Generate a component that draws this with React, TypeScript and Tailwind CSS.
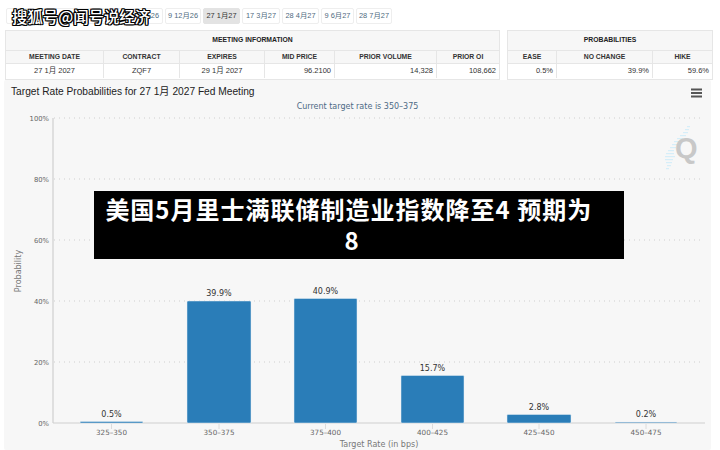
import React from "react";

const tabs = [
  { t: "26", w: "w-[157px]", cls: "justify-end pr-[3px]" },
  { t: "9 12月26", w: "w-[36px]" },
  { t: "27 1月27", w: "w-[37px]", active: true },
  { t: "17 3月27", w: "w-[38px]" },
  { t: "28 4月27", w: "w-[37px]" },
  { t: "9 6月27", w: "w-[33px]" },
  { t: "28 7月27", w: "w-[36px]" },
];

const c1 = "grid-cols-[98px_76px_85px_70px_102px_1fr]";
const c2 = "grid-cols-[49px_96px_1fr]";

function Table({ title, cols, heads, vals, aligns, width }: { title: string; cols: string; heads: string[]; vals: string[]; aligns: string[]; width: string }) {
  return (
    <div className={`${width} border border-[#e6e6e6] text-[7.5px] leading-none text-[#333]`}>
      <div className="h-[20px] flex items-center justify-center bg-[#f7f7f7] font-bold text-[6.8px] text-[#222] border-b border-[#e6e6e6]">{title}</div>
      <div className={`grid ${cols} h-[13px] bg-[#f7f7f7] border-b border-[#e6e6e6]`}>
        {heads.map((h) => (
          <div key={h} className="flex items-center justify-center font-bold text-[6.8px] text-[#333] border-r border-[#e6e6e6] last:border-r-0">{h}</div>
        ))}
      </div>
      <div className={`grid ${cols} h-[14px] bg-white`}>
        {vals.map((v, i) => (
          <div key={i} className={`flex items-center px-[3px] ${aligns[i]} border-r border-[#e6e6e6] last:border-r-0`}>{v}</div>
        ))}
      </div>
    </div>
  );
}

const bars = [
  { l: "325–350", v: "0.5%", x: 80, w: 63, y: 421.5, cx: 111.5, o: 1 },
  { l: "350–375", v: "39.9%", x: 187, w: 64, y: 301, cx: 219, o: 1 },
  { l: "375–400", v: "40.9%", x: 294, w: 63, y: 298.5, cx: 325.5, o: 1 },
  { l: "400–425", v: "15.7%", x: 401, w: 63, y: 375.5, cx: 432.5, o: 1 },
  { l: "425–450", v: "2.8%", x: 507, w: 64, y: 414.5, cx: 539, o: 1 },
  { l: "450–475", v: "0.2%", x: 615, w: 62, y: 422, cx: 646, o: 0.75 },
];

const ticks = [
  { l: "100%", y: 118 },
  { l: "80%", y: 179 },
  { l: "60%", y: 240 },
  { l: "40%", y: 301 },
  { l: "20%", y: 362 },
  { l: "0%", y: 423 },
];

const stripes = [
  [687, 126, 3], [685, 129, 4], [683, 132, 5], [680, 135, 6], [677, 138, 6], [674, 141, 5],
  [672, 144, 5], [670, 147, 6], [668, 150, 6], [666, 153, 8], [665, 156, 10], [665, 159, 8],
  [666, 162, 6], [667, 165, 4], [666, 168, 3],
];

function Chart() {
  const f = "'DejaVu Sans', sans-serif";
  return (
    <svg width="707" height="370" viewBox="4 80 707 370" className="block">
      <text x="11" y="94.5" fontFamily="'Liberation Sans', 'Noto Sans CJK SC', sans-serif" fontSize="10.2" fill="#222">Target Rate Probabilities for 27 1月 2027 Fed Meeting</text>
      <text x="357.5" y="109" textAnchor="middle" fontFamily={f} fontSize="8" fill="#4d6a85">Current target rate is 350–375</text>
      <g fill="#555">
        <rect x="691" y="88.5" width="11" height="2" />
        <rect x="691" y="92" width="11" height="2" />
        <rect x="691" y="95.5" width="11" height="2" />
      </g>
      {stripes.map(([x, y, w], i) => (
        <rect key={i} x={x} y={y} width={w} height="1.2" fill="#d6eef9" />
      ))}
      <text x="675" y="158" fontFamily="'Liberation Sans', sans-serif" fontWeight="700" fontSize="29" fill="#c8c8c8">Q</text>
      {ticks.map((t) => (
        <g key={t.l}>
          {t.l !== "0%" && <line x1="54" x2="704" y1={t.y} y2={t.y} stroke="#cfcfcf" strokeWidth="1" strokeDasharray="1 4" />}
          <text x="49" y={t.y + 3} textAnchor="end" fontFamily={f} fontSize="6.8" fill="#666">{t.l}</text>
        </g>
      ))}
      <line x1="53" x2="53" y1="118" y2="423" stroke="#cfcfcf" strokeWidth="1.2" />
      <line x1="53" x2="705" y1="423" y2="423" stroke="#cfcfcf" strokeWidth="1.2" />
      {bars.map((b) => (
        <g key={b.l}>
          <rect x={b.x} y={b.y} width={b.w} height={423 - b.y} rx="1" fill="#2a7db8" opacity={b.o} stroke="#e4eef5" strokeWidth="0.5" />
          <text x={b.cx} y={b.y - 5} textAnchor="middle" fontFamily={f} fontSize="8" fill="#333">{b.v}</text>
          <line x1={b.cx} x2={b.cx} y1="424" y2="429" stroke="#dcdcdc" />
          <text x={b.cx} y="435" textAnchor="middle" fontFamily={f} fontSize="7.2" fill="#666">{b.l}</text>
        </g>
      ))}
      <text x="379" y="447" textAnchor="middle" fontFamily={f} fontSize="8" fill="#777">Target Rate (in bps)</text>
      <text transform="translate(21 271) rotate(-90)" textAnchor="middle" fontFamily={f} fontSize="8" fill="#777">Probability</text>
    </svg>
  );
}

export default function App() {
  return (
    <div className="relative w-[720px] h-[450px] overflow-hidden bg-white font-['Liberation_Sans','Noto_Sans_CJK_SC',sans-serif]">
      <div className="flex gap-[2px] pt-[8px] pl-[6px] h-[30px]">
        {tabs.map((t) => (
          <div
            key={t.t}
            className={`${t.w} h-[16px] flex items-center ${t.cls ?? "justify-center"} rounded-[2px] border text-[7.4px] whitespace-nowrap ${
              t.active ? "bg-[#e3e3e3] border-[#e3e3e3] text-[#333]" : "bg-white border-[#eeeeee] text-[#4f6b80]"
            }`}
          >
            {t.t}
          </div>
        ))}
      </div>
      <div className="flex gap-[7px] pl-[5px] h-[50px]">
        <Table
          title="MEETING INFORMATION"
          width="w-[495px]"
          cols={c1}
          heads={["MEETING DATE", "CONTRACT", "EXPIRES", "MID PRICE", "PRIOR VOLUME", "PRIOR OI"]}
          vals={["27 1月 2027", "ZQF7", "29 1月 2027", "96.2100", "14,328", "108,662"]}
          aligns={["justify-center", "justify-center", "justify-center", "justify-end", "justify-end", "justify-end"]}
        />
        <Table
          title="PROBABILITIES"
          width="w-[206px]"
          cols={c2}
          heads={["EASE", "NO CHANGE", "HIKE"]}
          vals={["0.5%", "39.9%", "59.6%"]}
          aligns={["justify-end", "justify-end", "justify-end"]}
        />
      </div>
      <div className="ml-[4px] w-[707px] h-[370px] bg-[#f7f7f7] rounded-[2px]">
        <Chart />
      </div>
      <div className="absolute left-[12px] top-[6px] text-[15.4px] leading-[20px] font-medium text-white whitespace-nowrap font-['Noto_Sans_CJK_SC',sans-serif] [text-shadow:1px_0_0_#000,-1px_0_0_#000,0_1px_0_#000,0_-1px_0_#000,1px_1px_0_#000,-1px_-1px_0_#000,1px_-1px_0_#000,-1px_1px_0_#000]">
        搜狐号@闻号说经济
      </div>
      <div className="absolute left-[94px] top-[191px] w-[530px] h-[68px] bg-black pt-[2px] pl-[8px] pr-[22px] text-center text-white font-bold text-[24px] leading-[31px] tracking-[1px] font-['Noto_Sans_CJK_SC',sans-serif]">
        美国5月里士满联储制造业指数降至4 预期为{"\u00a0 "}8
      </div>
    </div>
  );
}
